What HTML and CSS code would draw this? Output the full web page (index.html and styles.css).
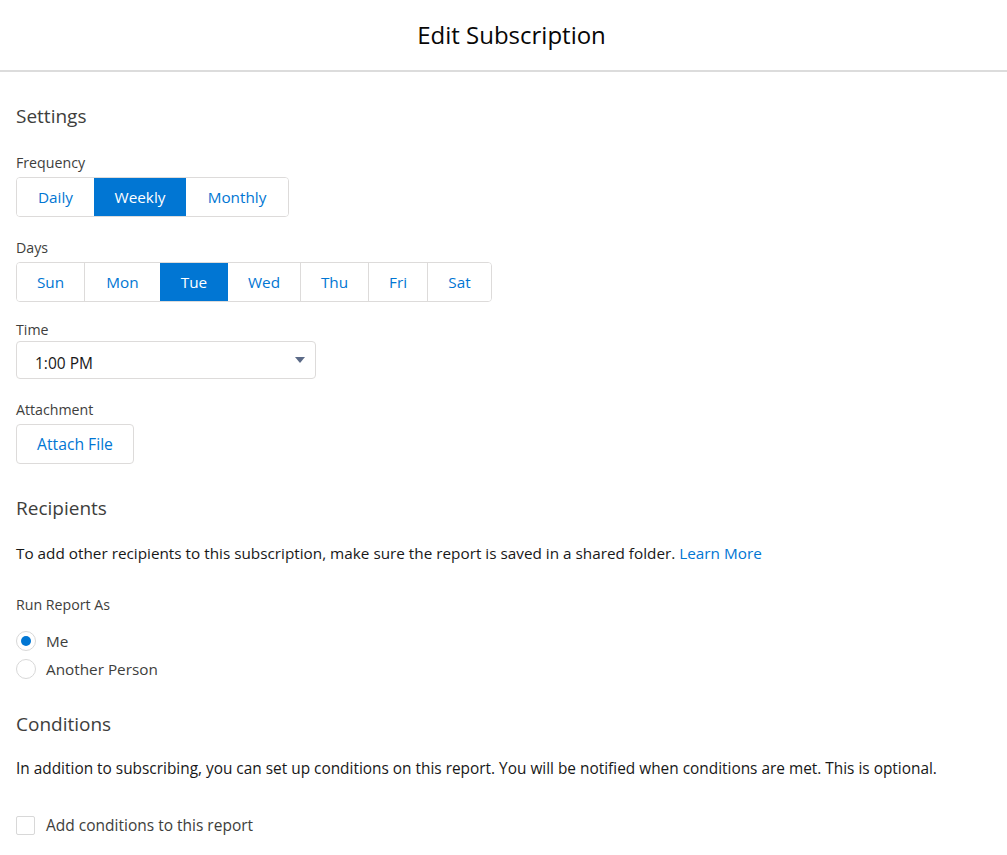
FILE: index.html
```html
<!DOCTYPE html>
<html lang="en">
<head>
<meta charset="utf-8">
<title>Edit Subscription</title>
<link rel="stylesheet" href="styles.css">
</head>
<body>
<header class="modal-header">
  <h1 class="modal-title">Edit Subscription</h1>
</header>
<main class="modal-body">
  <section class="section">
    <h2 class="section-title">Settings</h2>
    <div class="field">
      <div class="field-label">Frequency</div>
      <div class="btn-group">
        <button class="seg seg-daily">Daily</button>
        <button class="seg seg-weekly is-active">Weekly</button>
        <button class="seg seg-monthly">Monthly</button>
      </div>
    </div>
    <div class="field field-days">
      <div class="field-label">Days</div>
      <div class="btn-group">
        <button class="seg d-sun">Sun</button>
        <button class="seg d-mon">Mon</button>
        <button class="seg d-tue is-active">Tue</button>
        <button class="seg d-wed">Wed</button>
        <button class="seg d-thu">Thu</button>
        <button class="seg d-fri">Fri</button>
        <button class="seg d-sat">Sat</button>
      </div>
    </div>
    <div class="field field-time">
      <div class="field-label label-tight">Time</div>
      <div class="select">
        <span class="select-value">1:00 PM</span>
        <svg class="select-caret" width="10" height="6" viewBox="0 0 10 6"><path d="M0 0 H10 L5 6 Z" fill="#5b6a87"/></svg>
      </div>
    </div>
    <div class="field field-attach">
      <div class="field-label">Attachment</div>
      <button class="btn-neutral">Attach File</button>
    </div>
  </section>

  <section class="section section-recipients">
    <h2 class="section-title">Recipients</h2>
    <p class="text">To add other recipients to this subscription, make sure the report is saved in a shared folder. <a class="link" href="#">Learn More</a></p>
    <div class="field-label run-label">Run Report As</div>
    <div class="radio-list">
      <label class="radio"><span class="radio-faux is-checked"></span><span class="radio-text">Me</span></label>
      <label class="radio"><span class="radio-faux"></span><span class="radio-text">Another Person</span></label>
    </div>
  </section>

  <section class="section section-conditions">
    <h2 class="section-title">Conditions</h2>
    <p class="text text-cond">In addition to subscribing, you can set up conditions on this report. You will be notified when conditions are met. This is optional.</p>
    <label class="checkbox"><span class="checkbox-faux"></span><span class="checkbox-text">Add conditions to this report</span></label>
  </section>
</main>
</body>
</html>
```

FILE: styles.css
```css
* { box-sizing: border-box; }
html, body { margin: 0; padding: 0; background: #fff; }
body {
  font-family: "Open Sans", "Lato", sans-serif;
  color: #181818;
  width: 1007px;
}

.modal-header {
  height: 72px;
  border-bottom: 2px solid #dcdcdc;
  display: flex;
  align-items: center;
  justify-content: center;
  padding-left: 16px;
}
.modal-title {
  margin: 0;
  font-weight: 400;
  font-size: 24px;
  line-height: 32px;
  color: #080707;
}

.modal-body { padding: 30px 16px 0 16px; }

.section-title {
  margin: 0;
  font-weight: 400;
  font-size: 19px;
  line-height: 28px;
  color: #3e3e3c;
}

.field { margin-top: 23px; }
.field-days { margin-top: 21px; }
.field-time { margin-top: 18px; }
.field-attach { margin-top: 21px; }

.field-label {
  font-size: 14.2px;
  line-height: 20px;
  color: #3e3e3c;
  margin-bottom: 4px;
}
.label-tight { margin-bottom: 1px; }

.btn-group {
  display: inline-flex;
  border: 1px solid #dddbda;
  border-radius: 4px;
  overflow: hidden;
  height: 40px;
}
.seg {
  font-family: inherit;
  font-size: 15.3px;
  color: #0176d3;
  background: #fff;
  border: 0;
  border-left: 1px solid #dddbda;
  padding: 0;
  height: 38px;
  margin: 0;
}
.seg:first-child { border-left: 0; }
.seg.is-active { background: #0176d3; color: #fff; border-left-color: #0176d3; }
.seg.is-active + .seg { border-left-color: #0176d3; }

.seg-daily { width: 77px; }
.seg-weekly { width: 91px; }
.seg-monthly { width: 103px; }

.d-sun { width: 67px; }
.d-mon { width: 76px; }
.d-tue { width: 67px; }
.d-wed { width: 73px; }
.d-thu { width: 68px; }
.d-fri { width: 59px; }
.d-sat { width: 64px; }

.select {
  width: 300px;
  height: 38px;
  border: 1px solid #dddbda;
  border-radius: 4px;
  display: flex;
  align-items: center;
  justify-content: space-between;
  padding: 0 10px 0 18px;
}
.select-value { font-size: 15.5px; color: #181818; margin-top: 5px; }
.select-caret { display: block; margin-top: -1px; }

.btn-neutral {
  font-family: inherit;
  font-size: 15.7px;
  color: #0176d3;
  background: #fff;
  border: 1px solid #dddbda;
  border-radius: 4px;
  width: 118px;
  height: 40px;
  padding: 0;
}

.section-recipients { margin-top: 30px; }
.section-conditions { margin-top: 31px; }

.text {
  margin: 20px 0 0 0;
  font-size: 15.3px;
  line-height: 22px;
  color: #181818;
}
.text-cond { font-size: 15.4px; }
.link { color: #0176d3; text-decoration: none; }

.run-label { margin-top: 31px; margin-bottom: 16px; }

.radio-list { display: flex; flex-direction: column; gap: 8px; }
.radio { display: flex; align-items: center; gap: 10px; height: 20px; }
.radio-faux {
  width: 20px; height: 20px;
  border: 1px solid #d8d8d8;
  border-radius: 50%;
  display: flex; align-items: center; justify-content: center;
  flex: none;
}
.radio-faux.is-checked::after {
  content: "";
  width: 10px; height: 10px;
  border-radius: 50%;
  background: #0176d3;
}
.radio-text { font-size: 15.3px; color: #3e3e3c; }

.checkbox { display: flex; align-items: center; gap: 11px; margin-top: 34px; }
.checkbox-faux {
  width: 19px; height: 19px;
  border: 1px solid #d8d8d8;
  border-radius: 2px;
  flex: none;
}
.checkbox-text { font-size: 15.5px; color: #3e3e3c; }
```
